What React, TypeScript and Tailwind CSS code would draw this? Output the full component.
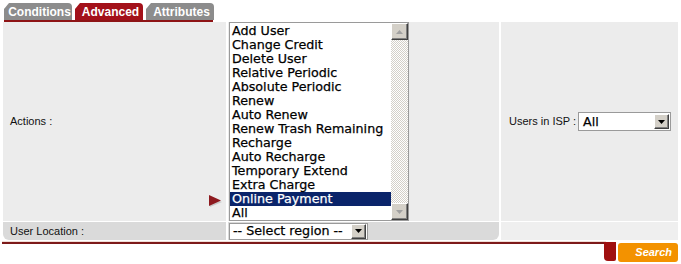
import React from "react";

const items = [
  "Add User",
  "Change Credit",
  "Delete User",
  "Relative Periodic",
  "Absolute Periodic",
  "Renew",
  "Auto Renew",
  "Renew Trash Remaining",
  "Recharge",
  "Auto Recharge",
  "Temporary Extend",
  "Extra Charge",
  "Online Payment",
  "All",
];

const verdana = "[font-family:'DejaVu_Sans',Verdana,sans-serif] [-webkit-text-stroke:0.25px_currentColor]";

function Tab({ label, active }: { label: string; active?: boolean }) {
  return (
    <div
      className={`h-[17px] w-[68px] flex items-center justify-center pl-[3px] text-white font-bold text-[12px] leading-none [font-family:'Liberation_Sans',Arial,sans-serif] rounded-tr-[4px] [clip-path:polygon(5px_0,100%_0,100%_100%,0_100%,0_6px)] ${
        active ? "bg-[#a3111a]" : "bg-[#8c8c8c]"
      }`}
    >
      {label}
    </div>
  );
}

function ScrollBtn({ up }: { up?: boolean }) {
  return (
    <div className="w-[17px] h-[17px] bg-[#d4d0c8] border border-t-white border-l-white border-r-[#404040] border-b-[#404040] flex items-center justify-center shadow-[inset_-1px_-1px_0_#808080]">
      <svg width="7" height="4" viewBox="0 0 7 4">
        <path d={up ? "M0 4 L3.5 0 L7 4 Z" : "M0 0 L3.5 4 L7 0 Z"} fill="#a0a0a0" />
      </svg>
    </div>
  );
}

function DropBtn() {
  return (
    <div className="w-[15px] h-[15px] bg-[#d4d0c8] border border-t-white border-l-white border-r-[#404040] border-b-[#404040] flex items-center justify-center shadow-[inset_-1px_-1px_0_#808080]">
      <svg width="7" height="4" viewBox="0 0 7 4">
        <path d="M0 0 L3.5 4 L7 0 Z" fill="#000" />
      </svg>
    </div>
  );
}

export default function App() {
  return (
    <div className="w-[681px] h-[264px] bg-white overflow-hidden">
      {/* tabs */}
      <div className="flex gap-[3px] pl-[4px] pt-[3px]">
        <Tab label="Conditions" />
        <Tab label="Advanced" active />
        <Tab label="Attributes" />
      </div>
      <div className="ml-[4px] w-[209px] h-[2px] bg-[#8e1416]" />

      {/* table */}
      <div className="ml-[3px] w-[675px] flex flex-col gap-[1px] text-[11px] text-[#111] [font-family:'Liberation_Sans',Tahoma,sans-serif]">
        <div className="flex h-[199px] gap-[2px]">
          <div className="relative w-[223px] bg-[#ececec] flex items-center pl-[7px]">
            Actions :
            <svg
              className="absolute right-[2px] top-[172px]"
              width="16"
              height="14"
              viewBox="0 0 16 14"
            >
              <path d="M2 3 L14 8 L2 13 Z" fill="#b0b0b0" opacity="0.6" />
              <path d="M1 1 L13 6.5 L1 12 Z" fill="#8e1a1f" />
            </svg>
          </div>
          <div className="w-[271px] bg-[#ececec] pl-[1px]">
            <div className="w-[180px] h-[199px] bg-white border border-[#9a9a9a] flex">
              <div className={`flex-1 pt-[1px] ${verdana} text-[12.7px] leading-[14px] text-black`}>
                {items.map((it) => (
                  <div
                    key={it}
                    className={`h-[14px] pl-[2px] whitespace-nowrap ${
                      it === "Online Payment" ? "bg-[#0a246a] text-white" : ""
                    }`}
                  >
                    {it}
                  </div>
                ))}
              </div>
              <div className="w-[17px] flex flex-col">
                <ScrollBtn up />
                <div className="flex-1 bg-[repeating-conic-gradient(#d4d0c8_0_25%,#ffffff_0_50%)] bg-[length:2px_2px]" />
                <ScrollBtn />
              </div>
            </div>
          </div>
          <div className="flex-1 bg-[#ececec] flex items-center pl-[8px] gap-[2px]">
            <span>Users in ISP :</span>
            <div className="w-[93px] h-[19px] bg-white border border-[#9a9a9a] flex items-center justify-between pl-[4px] pr-[1px]">
              <span className={`${verdana} text-[12.7px] text-black`}>All</span>
              <DropBtn />
            </div>
          </div>
        </div>

        <div className="flex h-[18px] gap-[2px]">
          <div className="w-[223px] bg-[#dadada] rounded-bl-[6px] flex items-center pl-[7px]">
            User Location :
          </div>
          <div className="w-[271px] bg-[#dadada] rounded-br-[6px] pl-[1px] flex items-center">
            <div className="w-[139px] h-[17px] bg-white border border-[#9a9a9a] flex items-center justify-between pl-[3px] pr-[1px]">
              <span className={`${verdana} text-[12.7px] text-black whitespace-nowrap`}>-- Select region --</span>
              <DropBtn />
            </div>
          </div>
          <div className="flex-1 bg-[#efefef]" />
        </div>
      </div>

      {/* bottom bar */}
      <div className="ml-[2px] mt-[1px] w-[604px] h-[1px] bg-[#f0ddd6]" />
      <div className="flex items-start">
        <div className="ml-[2px] w-[602px] h-[2px] bg-[#7d1a1a]" />
        <div className="w-[12px] h-[19px] bg-[#a01010] rounded-bl-[4px] rounded-br-[2px]" />
        <div className="ml-[2px] w-[60px] h-[19px] mt-[1px] bg-[#f39200] rounded-[3px] flex items-center justify-end pr-[6px] text-white font-bold italic text-[11px] [font-family:'Liberation_Sans',Tahoma,sans-serif]">
          Search
        </div>
      </div>
    </div>
  );
}
